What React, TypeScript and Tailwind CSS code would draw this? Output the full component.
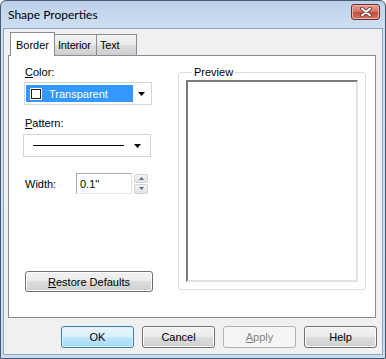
import type { ReactNode } from "react";

const ui = "font-['Liberation_Sans',Arial,sans-serif] text-[11px] leading-[14px] text-black";

function Arrow() {
  return (
    <svg width="7" height="4" viewBox="0 0 7 4">
      <polygon points="0,0 7,0 3.5,4" fill="#000" />
    </svg>
  );
}

function Button({
  children,
  kind = "normal",
}: {
  children: ReactNode;
  kind?: "normal" | "default" | "disabled";
}) {
  const look =
    kind === "default"
      ? "border-[#3c7fb1] bg-[linear-gradient(#eaf6fd,#d9f0fc_50%,#bee6fd_50%,#a7d9f5)] shadow-[inset_0_0_0_1px_#dff2fc]"
      : kind === "disabled"
        ? "border-[#adb2b5] bg-[#f4f4f4] text-[#838383]"
        : "border-[#707070] bg-[linear-gradient(#f2f2f2,#ebebeb_50%,#dddddd_50%,#cfcfcf)] shadow-[inset_0_0_0_1px_#fcfcfc]";
  return (
    <div
      className={`flex h-[22px] w-[73px] items-center justify-center rounded-[3px] border ${look}`}
    >
      {children}
    </div>
  );
}

function Tab({ label, active, w }: { label: string; active?: boolean; w: string }) {
  if (active) {
    return (
      <div className={`relative z-10 -mr-[1px] flex h-[24px] items-center border border-b-0 border-[#898c95] bg-white pl-[5px] ${w}`}>
        {label}
      </div>
    );
  }
  return (
    <div className={`mt-[2px] flex h-[21px] items-center border border-b-0 border-l-0 border-[#898c95] bg-[linear-gradient(#f2f2f2,#ebebeb_50%,#dddddd_50%,#cfcfcf)] pl-[3px] tracking-[-0.2px] first:border-l ${w}`}>
      {label}
    </div>
  );
}

export default function App() {
  return (
    <div
      className={`${ui} flex h-[359px] w-[386px] flex-col rounded-t-[6px] border border-[#4a5a6e] bg-[linear-gradient(#bcd2ea,#cfe0f2_30px,#c9dcf0)]`}
    >
      {/* title bar */}
      <div className="flex h-[27px] shrink-0 items-start justify-between pl-[7px] pr-[5px]">
        <span className="mt-[6px] font-['Lato','Liberation_Sans',sans-serif] text-[12px] leading-[16px]">
          Shape Properties
        </span>
        <div className="mt-[3px] flex h-[16px] w-[29px] items-center justify-center rounded-[3px] border border-[#6b2e2a] bg-[linear-gradient(#e4a298,#d2776b_45%,#c24a3d_55%,#d67b68)] shadow-[inset_0_0_0_1px_#eab1a8]">
          <svg width="12" height="10" viewBox="0 0 12 10">
            <path d="M2 1.5 L10 8.5 M10 1.5 L2 8.5" stroke="#5c2a26" strokeWidth="3.6" strokeLinecap="round" />
            <path d="M2 1.5 L10 8.5 M10 1.5 L2 8.5" stroke="#fff" strokeWidth="2" strokeLinecap="round" />
          </svg>
        </div>
      </div>

      {/* client area */}
      <div className="mx-[2px] mb-[3px] flex flex-1 flex-col border border-[#8ea4bd] bg-[#f0f0f0]">
        {/* tabs */}
        <div className="flex pl-[6px] pt-[3px]">
          <Tab label="Border" active w="w-[45px]" />
          <div className="flex">
            <Tab label="Interior" w="w-[43px]" />
            <Tab label="Text" w="w-[40px]" />
          </div>
        </div>

        {/* tab panel */}
        <div className="-mt-[1px] ml-[4px] flex h-[263px] w-[368px] border border-[#898c95] bg-white pl-[14px] pt-[9px]">
          {/* left column */}
          <div className="flex w-[130px] flex-col">
            <div className="pl-[2px]">
              <span className="underline">C</span>olor:
            </div>
            <div className="ml-[1px] mt-[3px] flex h-[23px] w-[128px] items-center border border-[#d5d5d5] bg-white p-[1px]">
              <div className="flex h-[17px] w-[107px] items-center gap-[7px] bg-[#3399ff] pl-[4px] text-white">
                <div className="h-[12px] w-[12px] border border-white bg-[#3399ff] p-0">
                  <div className="h-full w-full border border-[#1f1f1f] bg-white" />
                </div>
                Transparent
              </div>
              <div className="flex flex-1 justify-center">
                <Arrow />
              </div>
            </div>

            <div className="mt-[11px] pl-[2px]">
              <span className="underline">P</span>attern:
            </div>
            <div className="mt-[4px] flex h-[23px] w-[128px] items-center border border-[#d5d5d5] bg-white">
              <div className="ml-[9px] h-[1px] w-[91px] bg-black" />
              <div className="flex flex-1 justify-center">
                <Arrow />
              </div>
            </div>

            <div className="mt-[16px] flex items-center">
              <span className="w-[53px] pl-[2px]">Width:</span>
              <div className="flex h-[21px] w-[56px] items-start border border-[#abadb3] border-b-[#e3e9ef] border-r-[#dbdfe6] bg-white pl-[3px] pt-[3px]">
                0.1"
              </div>
              <div className="ml-[2px] flex h-[20px] w-[14px] flex-col gap-[1px]">
                <div className="flex flex-1 items-center justify-center rounded-[2px] border border-[#d2d2d2] bg-[linear-gradient(#f4f4f4,#e2e2e2)]">
                  <svg width="5" height="3" viewBox="0 0 5 3">
                    <polygon points="0,3 5,3 2.5,0" fill="#4f6a8f" />
                  </svg>
                </div>
                <div className="flex flex-1 items-center justify-center rounded-[2px] border border-[#d2d2d2] bg-[linear-gradient(#f4f4f4,#e2e2e2)]">
                  <svg width="5" height="3" viewBox="0 0 5 3">
                    <polygon points="0,0 5,0 2.5,3" fill="#4f6a8f" />
                  </svg>
                </div>
              </div>
            </div>

            <div className="ml-[2px] mt-[77px]">
              <div className="flex h-[21px] w-[128px] items-center justify-center rounded-[3px] border border-[#707070] bg-[linear-gradient(#f2f2f2,#ebebeb_50%,#dddddd_50%,#cfcfcf)] shadow-[inset_0_0_0_1px_#fcfcfc]">
                <span>
                  <span className="underline">R</span>estore Defaults
                </span>
              </div>
            </div>
          </div>

          {/* preview group */}
          <fieldset className="ml-[25px] h-[225px] w-[188px] rounded-[3px] border border-[#d5dfe5] pl-[7px]">
            <legend className="ml-[6px] px-[2px]">Preview</legend>
            <div className="mt-[1px] h-[202px] w-[172px] border-2 border-[#a0a0a0] border-l-[#7a7a7a] border-t-[#7a7a7a] border-b-[#e3e3e3] border-r-[#e3e3e3] bg-white" />
          </fieldset>
        </div>

        {/* dialog buttons */}
        <div className="mt-[8px] flex justify-end gap-[8px] pr-[5px]">
          <Button kind="default">OK</Button>
          <Button>Cancel</Button>
          <Button kind="disabled">
            <span>
              <span className="underline">A</span>pply
            </span>
          </Button>
          <Button>Help</Button>
        </div>
      </div>
    </div>
  );
}
